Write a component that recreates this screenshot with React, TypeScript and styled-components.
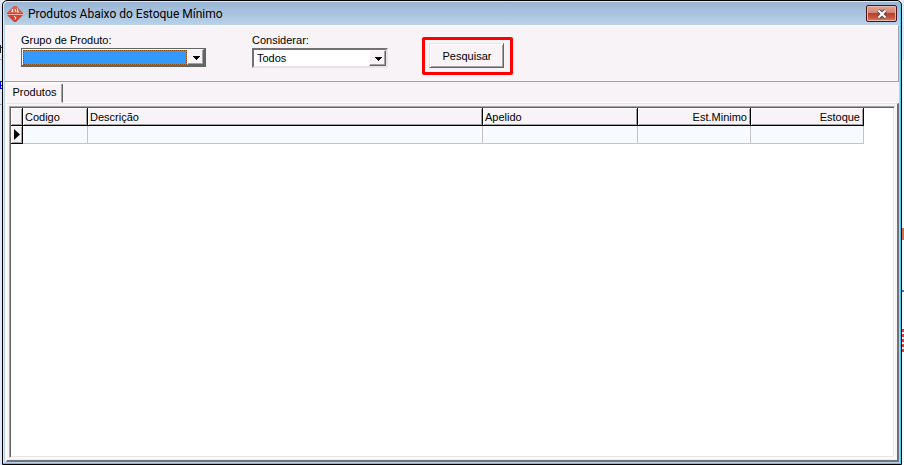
import React from "react";
import styled, { createGlobalStyle } from "styled-components";

const GlobalStyle = createGlobalStyle`
  * { box-sizing: border-box; }
  html, body { margin: 0; height: 100%; overflow: hidden; }
  #root { height: 100%; }
  body, button, select, table {
    font-family: "Liberation Sans", Arial, sans-serif;
    font-size: 11px;
    line-height: 13px;
    color: #000;
  }
`;

const Desktop = styled.div`
  display: grid;
  grid-template-columns: 2px minmax(0, 1fr) 2px;
  height: 100vh;
`;

const DesktopEdge = styled.svg`
  display: block;
  height: 100%;
  width: 100%;
  background: #e0e7fb;
`;

const Window = styled.main`
  display: flex;
  flex-direction: column;
  min-height: 0;
  border: 1px solid #000;
  border-radius: 5px 5px 0 0;
  background: linear-gradient(#98b4d2, #b9d1ea 24px, #b9d1ea);
  box-shadow: inset -1px -1px 0 #3fd0f4, inset 1px 1px 0 #d6ecfb;
  padding: 0 2px 2px;
`;

const TitleBar = styled.header`
  display: flex;
  align-items: center;
  gap: 4px;
  height: 24px;
  flex: none;
  padding: 1px 2px 0 1px;
`;

const Title = styled.h1`
  flex: 1;
  margin: 0;
  font: 400 12px/16px Roboto, "Noto Sans", sans-serif;
`;

const CloseButton = styled.button`
  display: grid;
  place-items: center;
  width: 31px;
  height: 17px;
  padding: 0;
  border: 1px solid #47141c;
  border-radius: 2px;
  background: linear-gradient(#e2a597, #d38471 45%, #bb3f28 50%, #c5543a 75%, #d5816a);
  box-shadow: inset 0 0 0 1px #e9b9ad;
`;

const Client = styled.div`
  display: flex;
  flex: 1;
  flex-direction: column;
  min-height: 0;
  background: #f7f3f7;
`;

const Filters = styled.form`
  display: flex;
  align-items: flex-start;
  flex: none;
  height: 57px;
  padding-left: 16px;
  border-top: 1px solid #fff;
  border-right: 1px solid #a5a2a5;
  border-bottom: 1px solid #a5a2a5;
`;

const Field = styled.div<{ $width: number; $gap: number }>`
  display: flex;
  flex-direction: column;
  gap: 1px;
  width: ${(p) => p.$width}px;
  margin-right: ${(p) => p.$gap}px;
  padding-top: 8px;
`;

const Combo = styled.div<{ $framed?: boolean }>`
  position: relative;
  height: ${(p) => (p.$framed ? 19 : 20)}px;
  border: 1px solid;
  border-width: ${(p) => (p.$framed ? "1px 2px 2px 1px" : "2px")};
  border-color: ${(p) =>
    p.$framed ? "#636563" : "#737173 #e7e3e7 #e7e3e7 #737173"};
  background: #fff;
`;

const Select = styled.select<{ $active?: boolean }>`
  display: block;
  appearance: none;
  width: ${(p) => (p.$active ? "calc(100% - 18px)" : "100%")};
  height: ${(p) => (p.$active ? "calc(100% - 1px)" : "100%")};
  margin: ${(p) => (p.$active ? "1px 0 0 1px" : 0)};
  padding: 1px 18px 0 3px;
  border: ${(p) => (p.$active ? "1px dotted #8a4a10" : "0")};
  border-radius: 0;
  outline: 0;
  background: ${(p) => (p.$active ? "#3399ff" : "#fff")};
`;

const Arrow = styled.span`
  position: absolute;
  top: 0;
  right: 0;
  display: grid;
  place-items: center;
  width: 17px;
  height: 100%;
  padding: 1px 0 0 1px;
  border: 1px solid;
  border-color: #fff #636563 #636563 #fff;
  background: #f7f3f7;
  box-shadow: inset -1px -1px 0 #a5a2a5;
  pointer-events: none;
`;

const Highlight = styled.div`
  margin-top: 11px;
  padding: 3px 6px 4px 4px;
  border: 3px solid #f00;
  border-radius: 2px;
`;

const SearchButton = styled.button`
  display: block;
  width: 75px;
  height: 25px;
  padding: 1px 0 0 1px;
  border: 1px solid;
  border-color: #e7e3e7 #636563 #636563 #e7e3e7;
  background: #f7f3f7;
  box-shadow: inset 1px 1px 0 #fff, inset -1px -1px 0 #a5a2a5;
`;

const Tabs = styled.div`
  display: flex;
  flex: none;
  height: 21px;
  padding: 1px 0 0 1px;
`;

const Tab = styled.button`
  width: 57px;
  padding: 0 0 1px;
  border: 1px solid;
  border-color: #fff #636563 transparent #fff;
  border-radius: 2px 2px 0 0;
  background: #f7f3f7;
  box-shadow: inset -1px 0 0 #a5a2a5;
`;

const TabLine = styled.div`
  flex: 1;
  border-bottom: 1px solid #fff;
`;

const Page = styled.section`
  display: flex;
  flex: 1;
  min-height: 0;
  margin-left: 1px;
  padding: 2px;
  border: solid;
  border-width: 1px 2px 2px 1px;
  border-color: #e7e3e7 #737173 #737173 #fff;
`;

const GridFrame = styled.div`
  flex: 1;
  min-width: 0;
  overflow: hidden;
  border: 1px solid;
  border-color: #a5a2a5 #fff #fff #a5a2a5;
  background: #fff;
  box-shadow: inset 1px 1px 0 #636563, inset -1px -1px 0 #e7e3e7;
  padding: 1px;
`;

const Grid = styled.table`
  table-layout: fixed;
  width: 853px;
  border-collapse: separate;
  border-spacing: 0;
`;

const Column = styled.col<{ $width: number }>`
  width: ${(p) => p.$width}px;
`;

const HeadCell = styled.th<{ $right?: boolean }>`
  height: 18px;
  padding: 1px 3px 0 2px;
  border-right: 1px solid #000;
  border-bottom: 1px solid #000;
  background: #f7f3f7;
  box-shadow: inset 1px 1px 0 #fff, inset -1px -1px 0 #a5a2a5;
  font-weight: 400;
  text-align: ${(p) => (p.$right ? "right" : "left")};
`;

const Cell = styled.td`
  height: 18px;
  padding: 0;
  border-right: 1px solid #c6c3c6;
  border-bottom: 1px solid #c6c3c6;
  background: #f7fbff;
`;

const MarkerCell = styled(HeadCell)`
  padding: 0 0 0 3px;
`;

const Marker = styled.svg`
  display: block;
`;

const columns = [
  { name: "Codigo", width: 65 },
  { name: "Descrição", width: 395 },
  { name: "Apelido", width: 155 },
  { name: "Est.Minimo", width: 113, right: true },
  { name: "Estoque", width: 113, right: true },
];

const Logo = () => (
  <svg width="18" height="18" viewBox="0 0 18 18" aria-hidden="true">
    <path d="M8 1h2l7 7v2l-7 7H8L1 10V8Z" fill="#cf4534" />
    <path d="M8 1h2l6 7H2Z" fill="#d9604f" />
    <path d="M1 9.500h16" stroke="#f0b5a8" />
    <path d="M7 4 6 5l1 1.500H5.500M9 4l1 3M11.500 3.500V7H13M8 11.500l2 1-1 2" fill="none" stroke="#fff" />
  </svg>
);

const DownArrow = () => (
  <Arrow>
    <svg width="7" height="4" viewBox="0 0 7 4" shapeRendering="crispEdges" aria-hidden="true">
      <path d="M0 0h7v1H6v1H5v1H4v1H3V3H2V2H1V1H0Z" />
    </svg>
  </Arrow>
);

export default function App() {
  return (
    <>
      <GlobalStyle />
      <Desktop>
        <DesktopEdge aria-hidden="true">
          <path d="M.5 45v8M0 47.500h2" fill="none" stroke="#222" />
          <path d="M0 59.500h2M0 104.500h2" stroke="#a5a2a5" />
          <path d="M0 81h2v1H1v3h1v1H1v2h1v1H0Z" fill="#00f" />
        </DesktopEdge>
        <Window>
          <TitleBar>
            <Logo />
            <Title>Produtos Abaixo do Estoque Mínimo</Title>
            <CloseButton type="button" aria-label="Fechar">
              <svg width="12" height="10" viewBox="0 0 12 10" aria-hidden="true">
                <path d="M2.500 1.500 9.500 8.500M9.500 1.500 2.500 8.500" stroke="#4a4a58" strokeWidth="4" />
                <path d="M2.500 1.500 9.500 8.500M9.500 1.500 2.500 8.500" stroke="#fff" strokeWidth="2" />
              </svg>
            </CloseButton>
          </TitleBar>
          <Client>
            <Filters onSubmit={(e) => e.preventDefault()}>
              <Field $width={185} $gap={46}>
                <label htmlFor="grupo">Grupo de Produto:</label>
                <Combo $framed>
                  <Select id="grupo" $active>
                    <option></option>
                  </Select>
                  <DownArrow />
                </Combo>
              </Field>
              <Field $width={136} $gap={34}>
                <label htmlFor="considerar">Considerar:</label>
                <Combo>
                  <Select id="considerar">
                    <option>Todos</option>
                  </Select>
                  <DownArrow />
                </Combo>
              </Field>
              <Highlight>
                <SearchButton type="submit">Pesquisar</SearchButton>
              </Highlight>
            </Filters>
            <Tabs role="tablist">
              <Tab type="button" role="tab" aria-selected="true" id="tab-produtos" aria-controls="produtos">
                Produtos
              </Tab>
              <TabLine />
            </Tabs>
            <Page role="tabpanel" id="produtos" aria-labelledby="tab-produtos">
              <GridFrame>
                <Grid>
                  <colgroup>
                    <Column $width={12} />
                    {columns.map((c) => (
                      <Column key={c.name} $width={c.width} />
                    ))}
                  </colgroup>
                  <thead>
                    <tr>
                      <HeadCell />
                      {columns.map((c) => (
                        <HeadCell key={c.name} $right={c.right} scope="col">
                          {c.name}
                        </HeadCell>
                      ))}
                    </tr>
                  </thead>
                  <tbody>
                    <tr>
                      <MarkerCell scope="row">
                        <Marker width="6" height="11" viewBox="0 0 6 11" aria-hidden="true">
                          <path d="M0 0 6 5.500 0 11Z" />
                        </Marker>
                      </MarkerCell>
                      {columns.map((c) => (
                        <Cell key={c.name} />
                      ))}
                    </tr>
                  </tbody>
                </Grid>
              </GridFrame>
            </Page>
          </Client>
        </Window>
        <DesktopEdge aria-hidden="true">
          <path d="M0 60h2v405H0Z" fill="#fafaff" />
          <path d="M0 228h2v12H0Z" fill="#dc6a4c" />
          <path d="M0 290h2v2H0Z" fill="#4a6cb0" />
          <path d="M1 329v25" stroke="#e5393c" strokeWidth="2" strokeDasharray="3 2" />
        </DesktopEdge>
      </Desktop>
    </>
  );
}
